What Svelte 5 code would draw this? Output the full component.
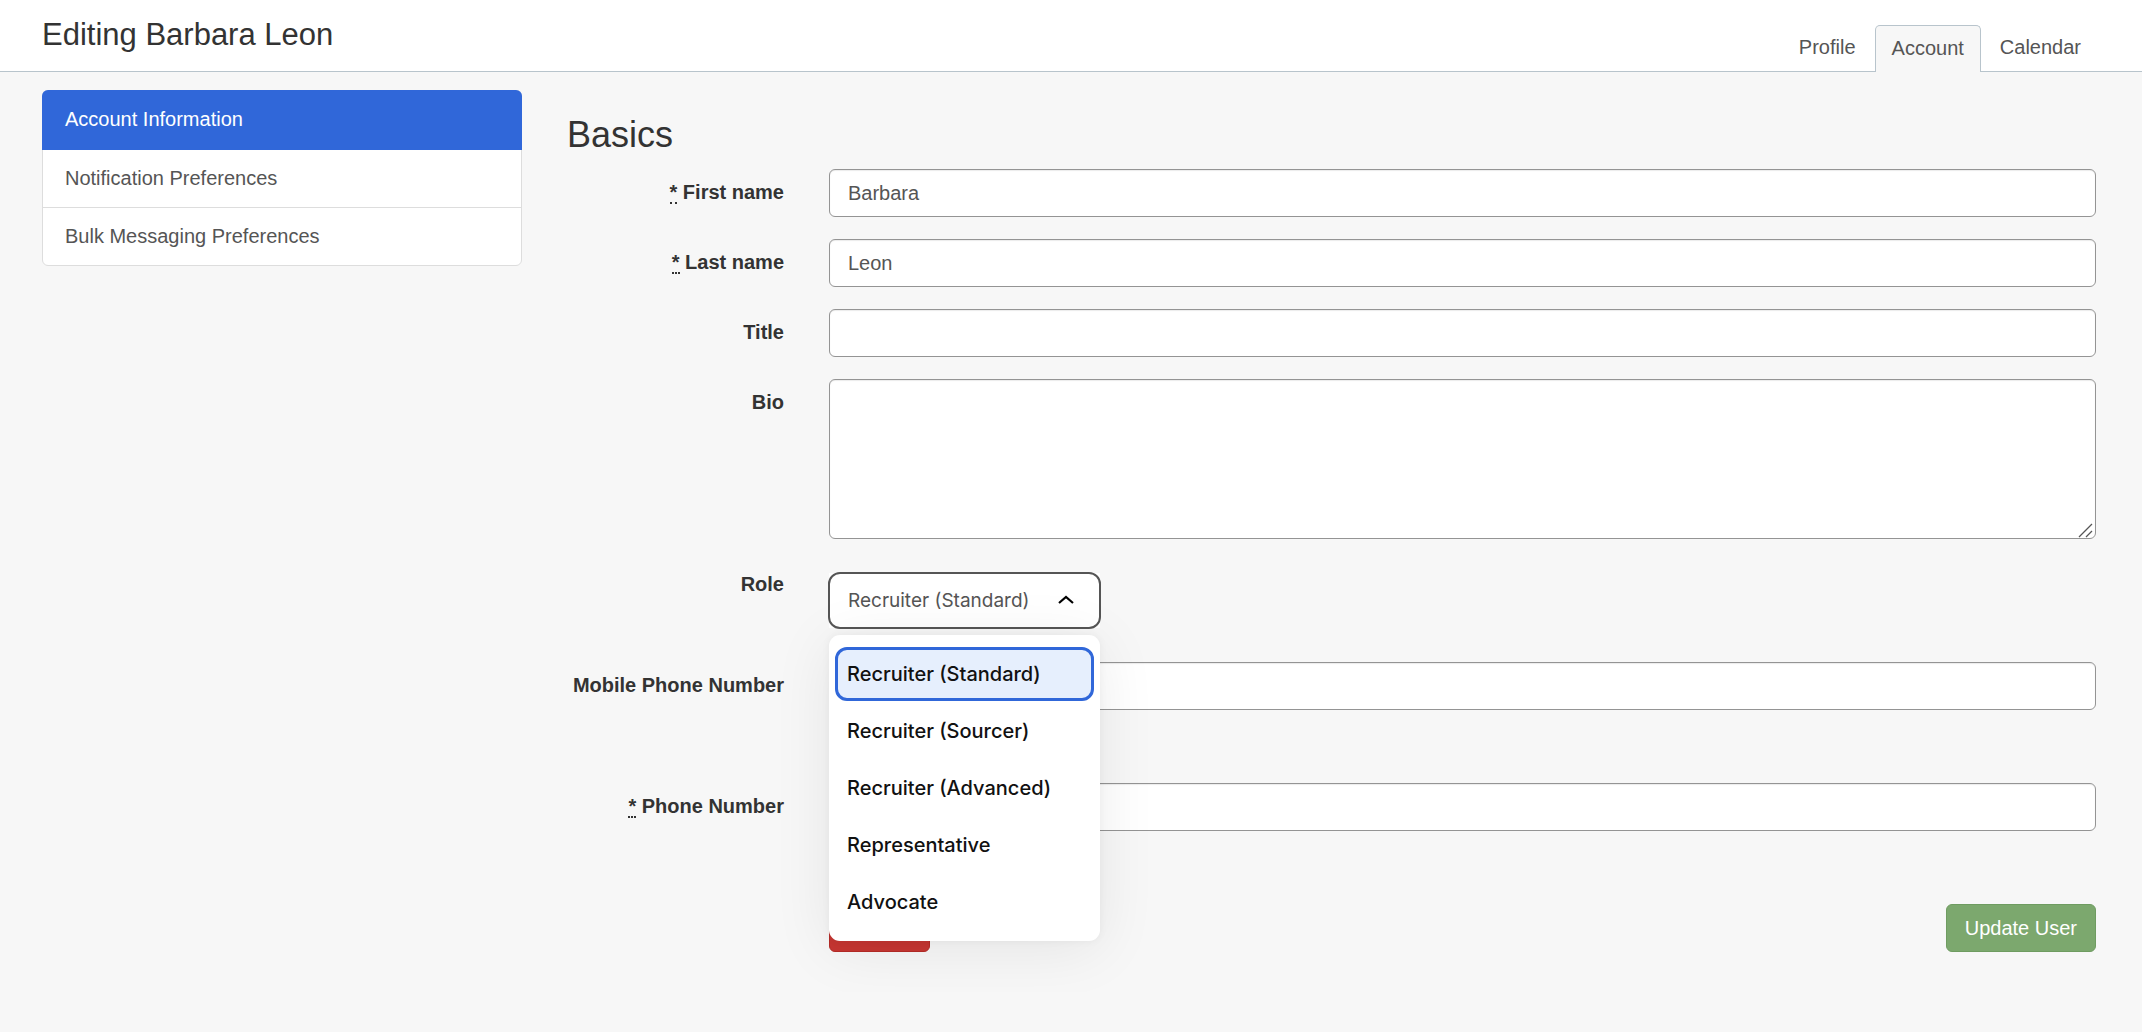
<script lang="ts">
  const tabs = ['Profile', 'Account', 'Calendar'];
  const sections = ['Account Information', 'Notification Preferences', 'Bulk Messaging Preferences'];
  const roles = [
    'Recruiter (Standard)',
    'Recruiter (Sourcer)',
    'Recruiter (Advanced)',
    'Representative',
    'Advocate'
  ];

  let tab = $state('Account');
  let section = $state('Account Information');
  let firstName = $state('Barbara');
  let lastName = $state('Leon');
  let title = $state('');
  let bio = $state('');
  let mobile = $state('');
  let phone = $state('');
  let role = $state('Recruiter (Standard)');
  let open = $state(true);

  function toggle(event: MouseEvent) {
    event.preventDefault();
    open = !open;
  }

  function choose(value: string) {
    role = value;
    open = false;
  }
</script>

<header class="topbar">
  <h1>Editing Barbara Leon</h1>
  <nav class="tabs" aria-label="User">
    {#each tabs as name}
      <a href="#{name.toLowerCase()}" class:active={tab === name} onclick={() => (tab = name)}>{name}</a>
    {/each}
  </nav>
</header>

<div class="layout">
  <nav class="sidebar" aria-label="Settings">
    {#each sections as name}
      <a href="#settings" class:active={section === name} onclick={() => (section = name)}>{name}</a>
    {/each}
  </nav>

  <main>
    <h2>Basics</h2>
    <form onsubmit={(e) => e.preventDefault()}>
      <div class="row">
        <label for="first"><abbr title="required">*</abbr> First name</label>
        <input id="first" type="text" bind:value={firstName} />
      </div>
      <div class="row">
        <label for="last"><abbr title="required">*</abbr> Last name</label>
        <input id="last" type="text" bind:value={lastName} />
      </div>
      <div class="row">
        <label for="title">Title</label>
        <input id="title" type="text" bind:value={title} />
      </div>
      <div class="row">
        <label for="bio">Bio</label>
        <div class="bio">
          <textarea id="bio" bind:value={bio}></textarea>
          <svg class="grip" viewBox="0 0 16 16" aria-hidden="true">
            <path d="M1 15 14 2M8 15l6-6" />
          </svg>
        </div>
      </div>
      <div class="row role-row">
        <label for="role">Role</label>
        <div class="role">
          <select id="role" bind:value={role} onmousedown={toggle}>
            {#each roles as name}
              <option value={name}>{name}</option>
            {/each}
          </select>
          <svg class="chevron" class:closed={!open} viewBox="0 0 16 10" aria-hidden="true">
            <path d="m1 8 7-6 7 6" />
          </svg>
          {#if open}
            <div class="menu">
              {#each roles as name}
                <button type="button" class:selected={role === name} onclick={() => choose(name)}>{name}</button>
              {/each}
            </div>
          {/if}
        </div>
      </div>
      <div class="row phone-row">
        <label for="mobile">Mobile Phone Number</label>
        <input id="mobile" type="tel" bind:value={mobile} />
      </div>
      <div class="row phone-row">
        <label for="phone"><abbr title="required">*</abbr> Phone Number</label>
        <input id="phone" type="tel" bind:value={phone} />
      </div>
      <div class="actions">
        <button type="button" class="danger" aria-label="Remove user"></button>
        <button type="submit" class="primary">Update User</button>
      </div>
    </form>
  </main>
</div>

<style>
  :global(body) {
    background: #f7f7f7;
    color: #333;
    font: 20px/28px 'Liberation Sans', Arial, sans-serif;
  }

  .topbar {
    display: flex;
    justify-content: space-between;
    align-items: flex-end;
    background: #fff;
    padding: 0 44px 0 42px;
    box-shadow: inset 0 -1px #b8c4cc;
  }

  h1 {
    margin: 0;
    padding: 15px 0 17px;
    font-size: 31px;
    line-height: 40px;
    font-weight: 400;
  }

  .tabs {
    display: flex;
    align-items: flex-end;
    gap: 2px;
  }

  .tabs a {
    box-sizing: border-box;
    height: 47px;
    padding: 7px 16px;
    border: 1px solid transparent;
    border-bottom: 0;
    border-radius: 5px 5px 0 0;
    color: #555;
    text-decoration: none;
  }

  .tabs a.active {
    padding-top: 8px;
    background: #f7f7f7;
    border-color: #b8c4cc;
  }

  .layout {
    display: flex;
    align-items: flex-start;
    gap: 45px;
    padding: 18px 46px 40px 42px;
  }

  .sidebar {
    flex: 0 0 480px;
    box-sizing: border-box;
    border: 1px solid #ddd;
    border-radius: 6px;
    background: #fff;
  }

  .sidebar a {
    display: block;
    padding: 14px 22px 15px;
    color: #555;
    text-decoration: none;
  }

  .sidebar a + a {
    border-top: 1px solid #ddd;
  }

  .sidebar a.active {
    margin: -1px -1px 0;
    padding: 15px 23px 17px;
    border-radius: 6px 6px 0 0;
    background: #3067d9;
    color: #fff;
  }

  .sidebar a.active + a {
    border-top: 0;
  }

  main {
    flex: 1;
    min-width: 0;
  }

  h2 {
    margin: 0;
    padding: 21px 0 10px;
    font-size: 36px;
    line-height: 48px;
    font-weight: 400;
  }

  .row {
    display: grid;
    grid-template-columns: 217px minmax(0, 1fr);
    column-gap: 45px;
    align-items: start;
    margin-bottom: 22px;
  }

  label {
    padding-top: 9px;
    text-align: right;
    font-weight: 700;
    white-space: nowrap;
  }

  abbr {
    text-decoration: none;
    border-bottom: 2px dotted #333;
    display: inline-block;
    line-height: 20px;
  }

  input,
  textarea {
    box-sizing: border-box;
    display: block;
    width: 100%;
    padding: 9px 18px;
    border: 1px solid #949494;
    border-radius: 6px;
    background: #fff;
    box-shadow: inset 0 1px 1px rgba(0, 0, 0, 0.08);
    color: #555;
    font: inherit;
  }

  .bio {
    position: relative;
  }

  textarea {
    height: 160px;
    resize: none;
  }

  .grip {
    position: absolute;
    right: 2px;
    bottom: 1px;
    width: 16px;
    height: 16px;
    fill: none;
    stroke: #555;
    stroke-width: 1.3;
  }

  .role-row {
    margin-bottom: 34px;
  }

  .role {
    position: relative;
    justify-self: start;
    margin-top: 12px;
    background: #fff;
    font-family: Inter, 'Liberation Sans', sans-serif;
  }

  select {
    appearance: none;
    box-sizing: border-box;
    display: block;
    width: 271px;
    height: 55px;
    padding: 0 48px 0 19px;
    border: 0;
    border-radius: 11px;
    outline: 2px solid #555;
    outline-offset: -1px;
    background: #fff;
    color: #555;
    font: inherit;
    font-size: 19px;
  }

  .chevron {
    position: absolute;
    right: 26px;
    top: 22px;
    width: 16px;
    height: 10px;
    fill: none;
    stroke: #000;
    stroke-width: 2.2;
  }

  .chevron.closed {
    transform: rotate(180deg);
  }

  .menu {
    position: absolute;
    z-index: 1;
    top: calc(100% + 7px);
    left: 0;
    right: 0;
    display: flex;
    flex-direction: column;
    gap: 3px;
    padding: 12px 6px;
    border-radius: 11px;
    background: #fff;
    box-shadow: 0 8px 60px rgba(0, 0, 0, 0.08), 0 0 8px rgba(0, 0, 0, 0.05);
  }

  .menu button {
    height: 54px;
    padding: 0 9px;
    border: 3px solid transparent;
    border-radius: 12px;
    background: none;
    color: #111;
    font: inherit;
    font-weight: 500;
    text-align: left;
    white-space: nowrap;
  }

  .menu button.selected {
    border-color: #3067d9;
    background: #e6effd;
  }

  .phone-row {
    margin-bottom: 73px;
  }

  .actions {
    display: flex;
    justify-content: space-between;
    padding-left: 262px;
  }

  .actions button {
    height: 48px;
    padding: 0 18px;
    border: 1px solid #6f9c61;
    border-radius: 6px;
    background: #7ca86e;
    color: #fff;
    font: inherit;
  }

  .actions .danger {
    width: 101px;
    border-color: #b52b27;
    background: #c63632;
  }
</style>
